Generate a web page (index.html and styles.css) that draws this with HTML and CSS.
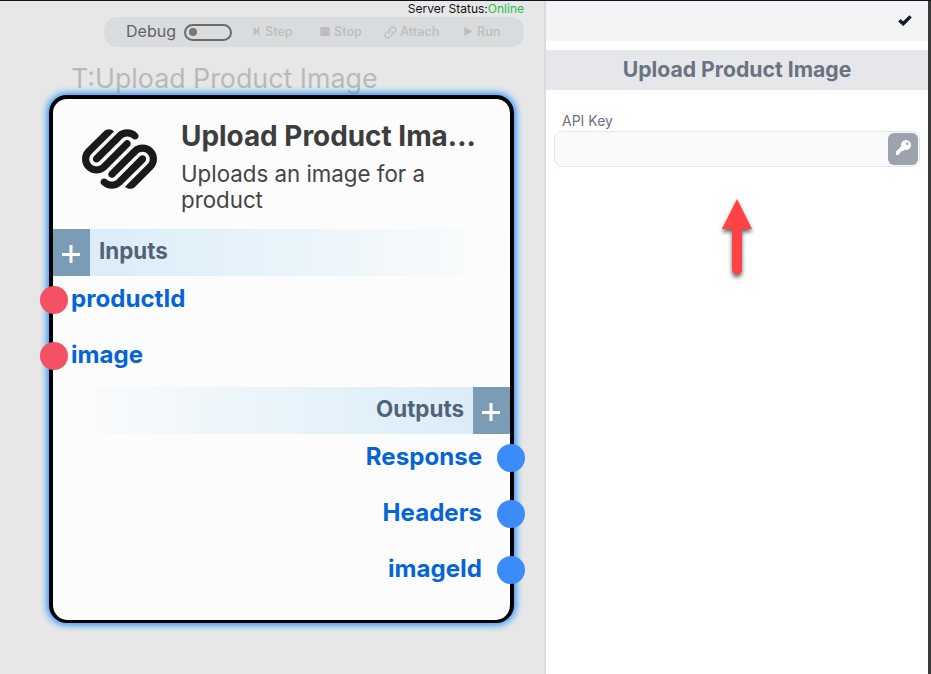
FILE: index.html
```html
<!DOCTYPE html>
<html lang="en">
<head>
<meta charset="utf-8">
<title>Upload Product Image</title>
<link rel="stylesheet" href="styles.css">
</head>
<body>
<div class="app">
  <main class="canvas">
    <div class="status">Server Status:<span class="online">Online</span></div>
    <div class="toolbar">
      <span class="debug">Debug</span>
      <span class="toggle"></span>
      <span class="tool step"><svg width="8" height="10" viewBox="0 0 8 10"><path d="M.8 0v9L5.400 4.500z"/><path d="M4.800 0h1.500v9H4.800z"/></svg><span>Step</span></span>
      <span class="tool stop"><svg width="10" height="10" viewBox="0 0 10 10"><path d="M.3 0h9.400v9H.3z"/></svg><span>Stop</span></span>
      <span class="tool attach"><svg class="link" width="13" height="13" viewBox="0 0 24 24"><path d="M10 14a5 5 0 0 1 0-7l4-4a5 5 0 0 1 7 7l-3 3M14 10a5 5 0 0 1 0 7l-4 4a5 5 0 0 1-7-7l3-3"/></svg><span>Attach</span></span>
      <span class="tool run"><svg width="9" height="10" viewBox="0 0 9 10"><path d="M.3 0v9L8.500 4.500z"/></svg><span>Run</span></span>
    </div>
    <h1 class="type-title">T:Upload Product Image</h1>
    <section class="node">
      <header class="node-head">
        <svg class="logo" viewBox="0 2.4 24 19.2"><path d="M22.655 8.719c-1.802-1.801-4.726-1.801-6.564 0l-7.351 7.35c-.45.45-.45 1.2 0 1.65.45.449 1.2.449 1.65 0l7.351-7.351c.899-.899 2.362-.899 3.264 0 .9.9.9 2.364 0 3.264l-7.239 7.239c.9.899 2.362.899 3.263 0l5.589-5.589c1.836-1.838 1.836-4.763.037-6.563zm-2.475 2.437c-.451-.45-1.201-.45-1.65 0l-7.354 7.389c-.9.899-2.361.899-3.262 0-.45-.45-1.2-.45-1.65 0s-.45 1.2 0 1.649c1.801 1.801 4.726 1.801 6.564 0l7.351-7.35c.449-.487.449-1.239.001-1.688zm-2.439-7.35c-1.801-1.801-4.726-1.801-6.564 0l-7.351 7.351c-.45.449-.45 1.199 0 1.649s1.2.45 1.65 0l7.395-7.351c.9-.899 2.371-.899 3.27 0 .451.45 1.201.45 1.65 0 .421-.487.421-1.199-.05-1.649zm-2.475 2.475c-.45-.45-1.2-.45-1.65 0l-7.351 7.389c-.899.9-2.363.9-3.265 0-.9-.899-.9-2.363 0-3.264l7.239-7.239c-.9-.9-2.362-.9-3.263 0L1.35 8.719c-1.8 1.8-1.8 4.725 0 6.563 1.801 1.801 4.725 1.801 6.564 0l7.35-7.351c.451-.488.451-1.238.002-1.65z"/></svg>
        <div class="node-text">
          <h2>Upload Product Ima...</h2>
          <p>Uploads an image for a product</p>
        </div>
      </header>
      <div class="band inputs">
        <button class="add" aria-label="Add input"><svg width="18" height="18" viewBox="0 0 18 18"><path d="M9 0v18M0 9.400h18"/></svg></button>
        <span>Inputs</span>
      </div>
      <ul class="ports in">
        <li><i class="dot"></i><span>productId</span></li>
        <li><i class="dot"></i><span>image</span></li>
      </ul>
      <div class="band outputs">
        <span>Outputs</span>
        <button class="add" aria-label="Add output"><svg width="18" height="18" viewBox="0 0 18 18"><path d="M9 0v18M0 9.400h18"/></svg></button>
      </div>
      <ul class="ports out">
        <li><span>Response</span><i class="dot"></i></li>
        <li><span>Headers</span><i class="dot"></i></li>
        <li><span>imageId</span><i class="dot"></i></li>
      </ul>
    </section>
  </main>
  <aside class="panel">
    <div class="panel-bar"><svg width="14" height="11" viewBox="0 0 14 11"><path d="M1.400 5.200 5.200 8.800 12.600 1.400"/></svg></div>
    <h2 class="panel-title">Upload Product Image</h2>
    <label class="field-label">API Key</label>
    <div class="field">
      <button class="key" aria-label="Select key"><svg width="15" height="15" viewBox="0 0 15 15"><path fill-rule="evenodd" d="M10 0a5 5 0 1 1-1.400 9.800L7.300 11H5.800L4.300 12.500V13L2 15H.5L0 14.500V11.500L5.200 6.400A5 5 0 0 1 10 0zM11.200 2.500a1.250 1.250 0 1 0 0 2.500 1.250 1.250 0 0 0 0-2.500z"/></svg></button>
    </div>
    <svg class="arrow" width="50" height="90" viewBox="0 0 50 90"><path d="M25 4 40 34H30V74.500a5 5 0 0 1-10 0V34H10z"/></svg>
  </aside>
  <div class="edge"></div>
</div>
</body>
</html>
```

FILE: styles.css
```css
* { box-sizing: border-box; }
body { margin: 0; font-family: Inter, "Liberation Sans", sans-serif; }
h1, h2, p, ul { margin: 0; padding: 0; }
button { border: 0; padding: 0; }
svg { display: block; flex: none; }
.app {
  display: grid;
  grid-template-columns: 546px 382px 3px;
  width: 931px;
  height: 674px;
  overflow: hidden;
  border-top: 1px solid #111128;
}
.canvas { position: relative; background: #e7e7e7; border-right: 2px solid #dbdce1; }
.status {
  height: 16px;
  padding-right: 20px;
  font-size: 12px;
  line-height: 16px;
  text-align: right;
  color: #111;
}
.online { color: #22c04a; }
.toolbar {
  display: flex;
  align-items: center;
  width: 420px;
  height: 30px;
  margin-left: 104px;
  padding-left: 22px;
  border-radius: 13px;
  background: #d9dcde;
}
.debug { width: 58px; font-size: 16px; color: #636363; line-height: 28px; padding-bottom: 2px; }
.toggle {
  display: flex;
  align-items: center;
  width: 48px;
  height: 17px;
  padding-left: 3px;
  border: 2px solid #6b6b6b;
  border-radius: 9px;
}
.toggle::before { content: ""; width: 8px; height: 8px; border-radius: 50%; background: #777; }
.tool {
  display: flex;
  align-items: center;
  font-size: 12.5px;
  font-weight: 600;
  line-height: 16px;
  color: #bfbfbf;
}
.tool svg { fill: #bdbdbd; }
.tool .link { fill: none; stroke: #bdbdbd; stroke-width: 2.4; }
.step { width: 67px; margin-left: 21px; gap: 4px; }
.stop { width: 64px; gap: 4px; }
.attach { width: 80px; gap: 3px; }
.run { gap: 4px; }
.type-title {
  margin: 14px 0 0 71px;
  font-size: 26.8px;
  font-weight: 400;
  line-height: 34px;
  color: #b9b9b9;
}
.node {
  position: absolute;
  left: 49px;
  top: 94px;
  width: 465px;
  height: 528px;
  border: 4px solid #000;
  border-bottom-width: 3px;
  border-radius: 18px;
  background: #fcfcfc;
  box-shadow: 0 0 7px 2px #2490ff;
}
.node-head { display: flex; height: 130px; padding: 21px 30px 0 28.500px; }
.logo { width: 75px; height: 60px; margin: 9px 24.500px 0 0; fill: #1b1a18; }
.node-text h2 { font-size: 27.900px; font-weight: 700; line-height: 32px; color: #3d3d3d; white-space: nowrap; }
.node-text p { width: 270px; margin-top: 9px; font-size: 22.3px; line-height: 26px; color: #444; }
.band {
  display: flex;
  height: 47px;
  font-size: 22.4px;
  font-weight: 700;
  line-height: 44px;
  color: #4f6478;
}
.inputs { gap: 9px; background: linear-gradient(90deg, #d9eaf7, #e5f2fa 40%, #fcfcfc); }
.outputs { justify-content: flex-end; gap: 9px; background: linear-gradient(270deg, #d9eaf7, #e5f2fa 40%, #fcfcfc); }
.add { display: grid; justify-content: center; width: 37px; height: 47px; padding: 16px 1px 0 0; background: #7a9cb6; }
.add path { stroke: #fff; stroke-width: 3; }
.ports { list-style: none; font-size: 24.1px; font-weight: 700; color: #0565d5; }
.ports li { display: flex; height: 56px; line-height: 46px; }
.dot { width: 28px; height: 28px; margin-top: 10.400px; border-radius: 50%; flex: none; }
.in { height: 111px; }
.in li { margin-left: -13px; gap: 3px; }
.in .dot { background: #f55166; }
.out li { justify-content: flex-end; margin-right: -15.300px; gap: 15.300px; }
.out .dot { background: #3c8bfa; }
.panel { background: #fff; }
.panel-bar {
  display: flex;
  align-items: center;
  justify-content: flex-end;
  height: 40px;
  padding: 0 16px 2px 0;
  background: #f3f4f6;
}
.panel-bar path { fill: none; stroke: #111827; stroke-width: 3.4; }
.panel-title {
  height: 40px;
  margin-top: 9px;
  font-size: 21.2px;
  font-weight: 700;
  line-height: 38px;
  text-align: center;
  color: #6b7280;
  background: #e5e7eb;
}
.field-label { display: block; margin: 21px 0 0 16px; font-size: 14px; line-height: 20px; color: #6b7280; }
.field {
  display: flex;
  justify-content: flex-end;
  width: 366px;
  height: 36px;
  margin-left: 8px;
  padding: 1px;
  border: 1px solid #e3e5ea;
  border-radius: 8px;
  background: #f9fafb;
}
.key { display: grid; justify-content: center; width: 30px; height: 32px; padding-top: 7px; border-radius: 6px; background: #9ca3af; }
.key path { fill: #fff; }
.arrow { margin: 28px 0 0 166px; overflow: visible; filter: drop-shadow(0 3px 2px rgba(0, 0, 0, .6)); }
.arrow path { fill: #ff4245; }
.edge { background: #3a3a3a; }
```
